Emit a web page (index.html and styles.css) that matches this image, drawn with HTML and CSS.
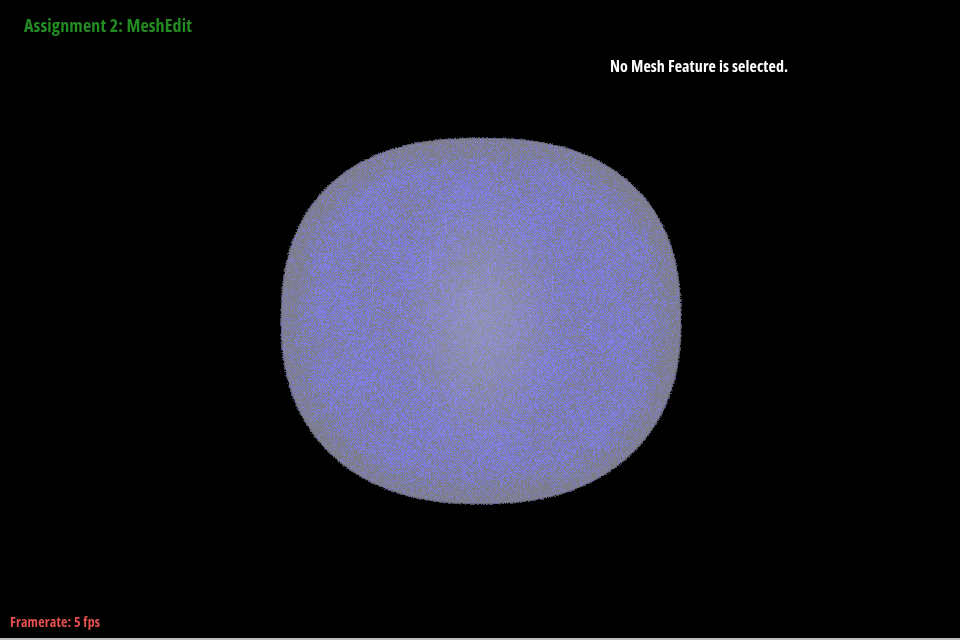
FILE: index.html
```html
<!DOCTYPE html>
<html lang="en">
<head>
<meta charset="utf-8">
<title>Assignment 2: MeshEdit</title>
<link rel="stylesheet" href="styles.css">
</head>
<body>
<main class="viewport">
  <canvas id="mesh" class="mesh" width="960" height="638"></canvas>
  <header class="top">
    <h1 class="title">Assignment 2: MeshEdit</h1>
    <p class="status">No Mesh Feature is selected.</p>
  </header>
  <footer class="framerate">Framerate: 5 fps</footer>
</main>
<script src="mesh.js"></script>
</body>
</html>
```
FILE: styles.css
```css
html, body { margin: 0; padding: 0; background: #000; }
body { width: 960px; height: 640px; overflow: hidden; }
.viewport {
  position: relative;
  width: 960px;
  height: 638px;
  border-bottom: 2px solid #bdbdbd;
  display: flex;
  flex-direction: column;
  justify-content: space-between;
  font-family: "Open Sans", "Liberation Sans", sans-serif;
  font-weight: 700;
  font-stretch: 75%;
}
.mesh { position: absolute; inset: 0; }
.top { position: relative; display: flex; flex-direction: column; padding: 13px 0 0 24px; }
.title { margin: 0; font-size: 18px; line-height: 24px; font-weight: 700; letter-spacing: 0.13px; color: #228b22; }
.status { margin: 17px 0 0 586px; font-size: 16px; line-height: 24px; letter-spacing: 0.1px; color: #fff; }
.framerate { position: relative; padding: 0 0 8px 10px; font-size: 14px; line-height: 16px; letter-spacing: 0.15px; color: #e6504f; }
```
FILE: mesh.js
```js
(function () {
  var ctx = document.getElementById('mesh').getContext('2d');
  var img = ctx.createImageData(960, 638);
  var d = img.data;
  var cx = 481, cy = 321, rx = 201, ry = 184;
  var seed = 12345;
  function rnd() {
    seed = (seed * 1664525 + 1013904223) >>> 0;
    return seed / 4294967296;
  }
  function smooth(a, b, t) {
    var s = Math.max(0, Math.min(1, (t - a) / (b - a)));
    return s * s * (3 - 2 * s);
  }
  for (var y = 0; y < 638; y++) {
    for (var x = 0; x < 960; x++) {
      var i = (y * 960 + x) * 4;
      d[i + 3] = 255;
      var u = (x + 0.5 - cx) / rx, v = (y + 0.5 - cy) / ry;
      var p = v < 0 ? 2.42 : 2.3;
      var r = Math.pow(Math.pow(Math.abs(u), p) + Math.pow(Math.abs(v), p), 1 / p);
      var noise = rnd();
      var edge = (1 - r) * rx;
      var cover = edge > noise * 1.6 - 0.3 ? Math.min(1, 0.55 + edge * 0.18) : 0;
      if (cover <= 0) continue;
      var warpX = u * Math.abs(u) * 9, warpY = v * Math.abs(v) * 9;
      var lattice = Math.sin(x * 2.19 + warpX) * Math.sin(y * 2.19 + warpY);
      var bands = Math.sin(u * 11 + 1.5 * Math.sin(v * 4)) * Math.sin(v * 11 + 1.5 * Math.sin(u * 4));
      var core = Math.sqrt(u * u * 2.4 + v * v * 0.8);
      var amount = 0.34 + 0.18 * smooth(0.15, 0.6, core) - 0.36 * smooth(0.8, 1, r);
      var chance = amount + 0.3 * lattice + 0.06 * bands;
      var blue = noise * 0.45 + rnd() * 0.55 < chance;
      var shade = rnd();
      // The middle of the surface catches the light: a paler, greyer lavender.
      var glow = 18 * (1 - smooth(0, 0.75, core));
      var cr, cg, cb;
      if (blue) {
        cr = 118 + shade * 14 + glow; cg = cr; cb = 216 + shade * 30;
      } else {
        cr = 122 + shade * 8 + glow; cg = cr; cb = 130 + shade * 26 + glow * 1.4;
      }
      d[i] = cr * cover; d[i + 1] = cg * cover; d[i + 2] = cb * cover;
    }
  }
  // Long vertical and diagonal wires that stand out where facets line up.
  var wires = [
    [454, 272, 454, 325], [453, 345, 453, 356], [445, 215, 445, 236], [446, 225, 446, 232],
    [430, 250, 430, 273], [426, 338, 426, 352], [428, 300, 428, 318], [500, 232, 506, 226],
    [515, 345, 515, 352], [518, 330, 518, 340], [372, 275, 372, 300], [385, 330, 400, 346],
    [400, 300, 400, 312], [575, 335, 592, 320], [590, 316, 600, 306], [419, 376, 419, 388],
    [410, 420, 410, 432], [552, 276, 552, 292], [470, 290, 470, 300]
  ];
  wires.forEach(function (w) {
    var n = Math.max(Math.abs(w[2] - w[0]), Math.abs(w[3] - w[1]));
    for (var k = 0; k <= n; k++) {
      if (k % 3 === 2) continue;
      var x = Math.round(w[0] + (w[2] - w[0]) * k / n), y = Math.round(w[1] + (w[3] - w[1]) * k / n);
      var i = (y * 960 + x) * 4;
      d[i] = 140; d[i + 1] = 140; d[i + 2] = 240;
    }
  });
  ctx.putImageData(img, 0, 0);
})();
```
